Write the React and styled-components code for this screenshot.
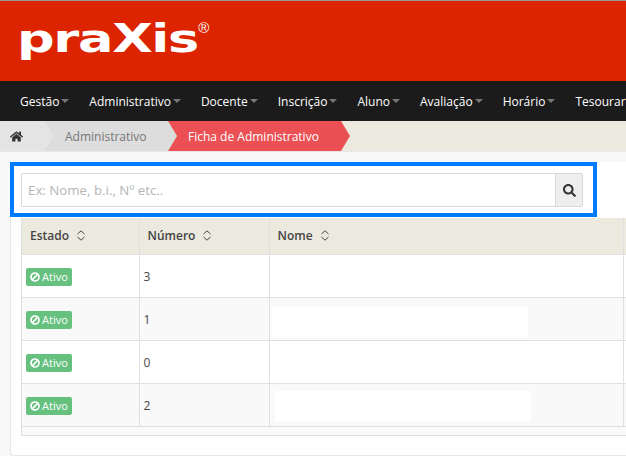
import React from 'react'
import styled, { createGlobalStyle } from 'styled-components'
import { FaHome, FaSearch } from 'react-icons/fa'

const GlobalStyle = createGlobalStyle`
  html, body {
    margin: 0;
    padding: 0;
    height: 456px;
    overflow: hidden;
    background: #f8f8f8;
    font-family: "Open Sans", "Liberation Sans", sans-serif;
    color: #333;
  }
  * { box-sizing: border-box; }
`

const Page = styled.div`
  width: 626px;
  height: 456px;
  overflow: hidden;
  display: flex;
  flex-direction: column;
`

const Header = styled.header`
  height: 81px;
  flex: none;
  background: #dc2400;
  border-top: 1px solid #999;
  padding: 13px 0 0 17px;
  display: flex;
  align-items: flex-start;
  color: #fff;
`

const Logo = styled.div`
  font-family: "DejaVu Sans", sans-serif;
  font-weight: 700;
  font-size: 39px;
  line-height: 50px;
  letter-spacing: -1px;
  transform: scaleX(1.35);
  transform-origin: left top;
`

const Registered = styled.span`
  font-family: "Liberation Sans", sans-serif;
  font-size: 15px;
  line-height: 16px;
  margin: 6px 0 0 47px;
`

const Nav = styled.nav`
  height: 40px;
  flex: none;
  background: #1b1b1b;
  display: flex;
  align-items: center;
  padding-left: 20px;
  gap: 20px;
  white-space: nowrap;
`

const NavItem = styled.a`
  color: #fff;
  font-size: 12px;
  display: flex;
  align-items: center;
  flex: none;
  &::after {
    content: '';
    margin-left: 2px;
    border-top: 4px solid #777;
    border-left: 4px solid transparent;
    border-right: 4px solid transparent;
    display: ${p => (p.$caret ? 'block' : 'none')};
  }
`

const Breadcrumb = styled.div`
  height: 31px;
  flex: none;
  background: #ece9df;
  border-bottom: 1px solid #e8e8e8;
  display: flex;
  align-items: stretch;
`

const Crumb = styled.div`
  width: ${p => p.$width}px;
  margin-left: ${p => p.$overlap || 0}px;
  padding-left: ${p => p.$pad}px;
  background: ${p => p.$bg};
  color: ${p => p.$color};
  font-size: 12px;
  display: flex;
  align-items: center;
  clip-path: polygon(0 0, calc(100% - 9px) 0, 100% 50%, calc(100% - 9px) 100%, 0 100%, ${p => p.$notch}px 50%);
`

const Panel = styled.main`
  flex: 1;
  margin: 10px 0 0 10px;
  background: #fff;
  border-left: 1px solid #e8e8e8;
  border-bottom: 1px solid #e8e8e8;
  border-bottom-left-radius: 4px;
  display: flex;
  flex-direction: column;
`

const SearchFrame = styled.div`
  width: 587px;
  height: 55px;
  margin-left: -1px;
  border: 4px solid #007bff;
  padding: 7px 10px 6px 7px;
  flex: none;
`

const SearchGroup = styled.div`
  height: 34px;
  display: flex;
  border: 1px solid #d9d9d9;
  border-radius: 2px;
`

const SearchInput = styled.input`
  flex: 1;
  min-width: 0;
  border: 0;
  outline: 0;
  padding: 0 6px;
  font: 13.3px "Open Sans", sans-serif;
  &::placeholder { color: #b5b5b5; opacity: 1; }
`

const SearchButton = styled.button`
  width: 27px;
  border: 0;
  border-left: 1px solid #d9d9d9;
  background: #eee;
  color: #333;
  padding: 0;
  display: flex;
  align-items: center;
  justify-content: center;
`

const TableWrap = styled.div`
  margin: 1px 0 0 10px;
  border-bottom: 1px solid #e0e0e0;
  border-left: 1px solid #e0e0e0;
  background: #f9f9f9;
  padding-bottom: 8px;
  overflow: hidden;
`

const Table = styled.table`
  width: 640px;
  border-collapse: collapse;
  table-layout: fixed;
  font-size: 12px;
  th, td {
    border: 1px solid #e0e0e0;
    border-left-width: 0;
    border-top-width: 0;
    padding: 0;
  }
  td { padding-top: 2px; }
  th:nth-child(1) { width: 117px; }
  th:nth-child(2) { width: 130px; }
  th:nth-child(3) { width: 354px; }
`

const Th = styled.th`
  height: 36px;
  background: #ece9df;
  text-align: left;
  font-weight: 600;
  color: #444;
  white-space: nowrap;
  > div { display: flex; align-items: center; padding-left: 8px; gap: 8px; }
`

const Row = styled.tr`
  height: 43px;
  background: ${p => (p.$odd ? '#f9f9f9' : '#fff')};
`

const Badge = styled.span`
  display: inline-flex;
  align-items: center;
  gap: 2px;
  width: 46px;
  height: 18px;
  margin-left: 4px;
  padding-left: 4px;
  background: #66c17f;
  border-radius: 2px;
  color: #fff;
  font-size: 11px;
  font-weight: 500;
`

const NumberCell = styled.td`
  padding-left: 4px !important;
  color: #444;
  font-size: 12px;
`

const NameCell = styled.td`
  padding-left: ${p => p.$inset}px !important;
`

const Redacted = styled.div`
  width: 256px;
  height: 31px;
  margin-top: ${p => p.$shift}px;
  background: #fff;
`

const SortIcon = () => (
  <svg width="8" height="11" viewBox="0 0 8 11" fill="none" stroke="#444" strokeWidth="1">
    <path d="M.5 4 4 .8 7.5 4M.5 7 4 10.2 7.5 7" />
  </svg>
)

const BanIcon = () => (
  <svg width="10" height="10" viewBox="0 0 10 10" fill="none" stroke="#fff" strokeWidth="1.7">
    <circle cx="5" cy="5" r="4" />
    <path d="M2.4 7.6 7.6 2.4" />
  </svg>
)

const menu = ['Gestão', 'Administrativo', 'Docente', 'Inscrição', 'Aluno', 'Avaliação', 'Horário']
const rows = [
  { num: 3 },
  { num: 1, inset: 2, shift: 4 },
  { num: 0 },
  { num: 2, inset: 5, shift: 2 },
]

export default function App() {
  return (
    <Page>
      <GlobalStyle />
      <Header>
        <Logo>praXis</Logo>
        <Registered>®</Registered>
      </Header>
      <Nav>
        {menu.map(m => <NavItem key={m} $caret>{m}</NavItem>)}
        <NavItem>Tesouraria</NavItem>
      </Nav>
      <Breadcrumb>
        <Crumb $width={52} $pad={10} $bg="#e4e4e4" $color="#333" $notch={0}><FaHome size={13} /></Crumb>
        <Crumb $width={133} $overlap={-8} $pad={21} $bg="#dddddd" $color="#777" $notch={9}>Administrativo</Crumb>
        <Crumb $width={182} $overlap={-9} $pad={20} $bg="#eb5055" $color="#fff" $notch={9}>Ficha de Administrativo</Crumb>
      </Breadcrumb>
      <Panel>
        <SearchFrame>
          <SearchGroup>
            <SearchInput placeholder="Ex: Nome, b.i., Nº etc.." />
            <SearchButton><FaSearch size={13} /></SearchButton>
          </SearchGroup>
        </SearchFrame>
        <TableWrap>
          <Table>
            <thead>
              <tr>
                <Th><div>Estado <SortIcon /></div></Th>
                <Th><div>Número <SortIcon /></div></Th>
                <Th><div>Nome <SortIcon /></div></Th>
                <Th />
              </tr>
            </thead>
            <tbody>
              {rows.map((r, i) => (
                <Row key={r.num} $odd={i % 2 === 1}>
                  <td><Badge><BanIcon /> Ativo</Badge></td>
                  <NumberCell>{r.num}</NumberCell>
                  <NameCell $inset={r.inset}>{r.inset !== undefined && <Redacted $shift={r.shift} />}</NameCell>
                  <td />
                </Row>
              ))}
            </tbody>
          </Table>
        </TableWrap>
      </Panel>
    </Page>
  )
}
